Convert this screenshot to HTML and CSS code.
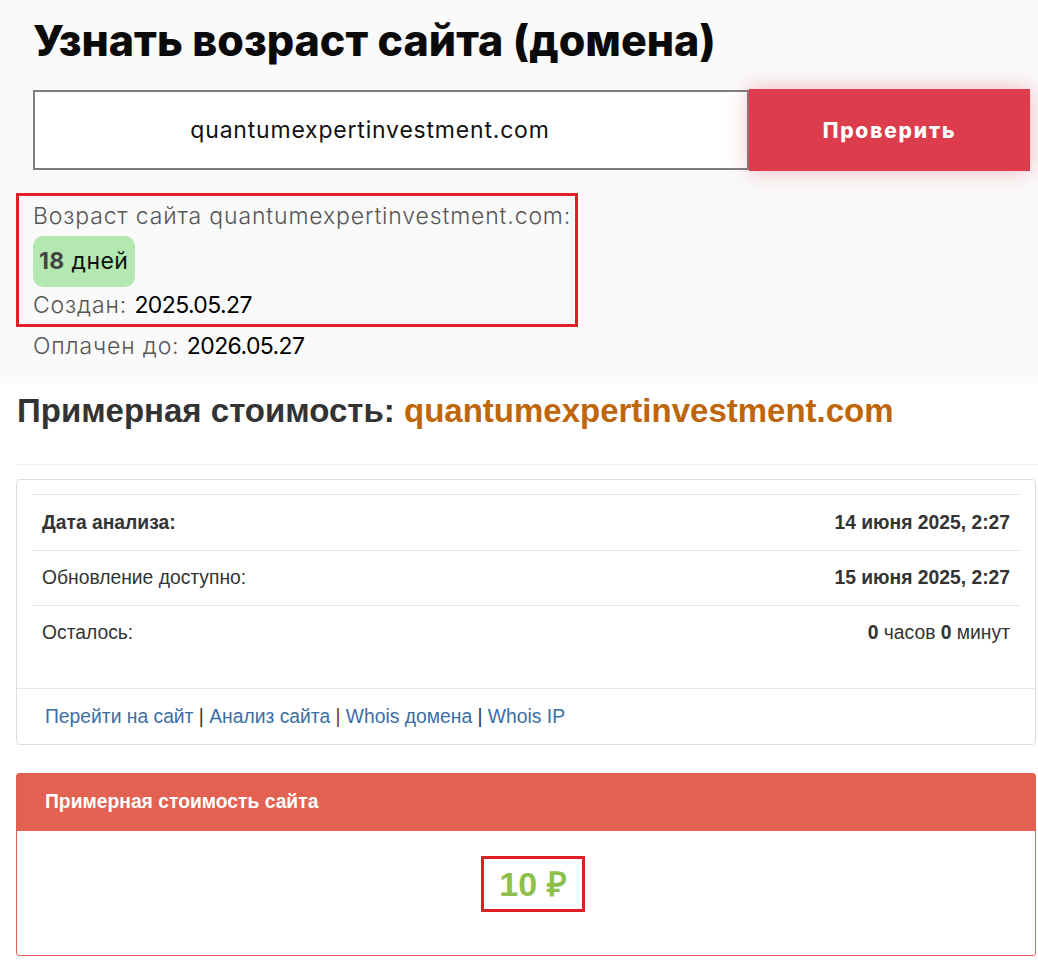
FILE: index.html
```html
<!DOCTYPE html>
<html lang="ru">
<head>
    <meta charset="UTF-8">
    <meta name="viewport" content="width=device-width, initial-scale=1.0">
    <title>Узнать возраст сайта</title>
    <link rel="stylesheet" href="styles.css">
</head>
<body>
    <section class="age">
        <h1>Узнать возраст сайта (домена)</h1>
        <form class="check">
            <div class="check-input">quantumexpertinvestment.com</div>
            <button type="button">Проверить</button>
        </form>
        <div class="age-result">
            <div class="line">Возраст сайта quantumexpertinvestment.com:</div>
            <div class="badge"><b>18</b> дней</div>
            <div class="line line-short">Создан: <span class="val">2025.05.27</span></div>
        </div>
        <div class="line paid">Оплачен до: <span class="val">2026.05.27</span></div>
    </section>

    <section class="cost">
        <h2>Примерная стоимость: <span class="domain">quantumexpertinvestment.com</span></h2>
        <hr>
        <div class="panel">
            <div class="panel-body">
                <table class="info">
                    <tr>
                        <td><b>Дата анализа:</b></td>
                        <td class="r"><b>14 июня 2025, 2:27</b></td>
                    </tr>
                    <tr>
                        <td>Обновление доступно:</td>
                        <td class="r"><b>15 июня 2025, 2:27</b></td>
                    </tr>
                    <tr>
                        <td>Осталось:</td>
                        <td class="r"><b>0</b> часов <b>0</b> минут</td>
                    </tr>
                </table>
            </div>
            <div class="panel-footer">
                <a href="#">Перейти на сайт</a> | <a href="#">Анализ сайта</a> <span class="sep-visited">|</span> <a href="#">Whois домена</a> | <a href="#">Whois IP</a>
            </div>
        </div>

        <div class="panel panel-red">
            <div class="panel-heading">Примерная стоимость сайта</div>
            <div class="panel-price">
                <span class="price">10 ₽</span>
            </div>
        </div>
    </section>
</body>
</html>
```

FILE: styles.css
```css
* {
    box-sizing: border-box;
    margin: 0;
    padding: 0;
}

body {
    background: #fff;
    font-family: 'Liberation Sans', Arial, sans-serif;
}

/* верхний блок - проверка возраста */
.age {
    background: #fafafa;
    padding: 0 8px 17px 33px;
    font-family: Inter, 'Noto Sans', sans-serif;
}

h1 {
    font-size: 43px;
    font-weight: 800;
    line-height: 80px;
    color: #0a0a0a;
}

.check {
    display: flex;
    align-items: center;
    margin-top: 9px;
}

.check-input {
    flex: 1;
    height: 80px;
    border: 2px solid #7d7d7d;
    background: #fff;
    display: flex;
    align-items: center;
    justify-content: center;
    padding-right: 42px;
    font-size: 23px;
    letter-spacing: 0.8px;
    color: #111;
}

.check button {
    width: 281px;
    height: 82px;
    border: none;
    background: #dd3c4c;
    color: #fff;
    font-family: Inter, 'Noto Sans', sans-serif;
    font-size: 21px;
    font-weight: 800;
    letter-spacing: 1.8px;
    box-shadow: 0 0 22px rgba(221, 60, 76, 0.35);
    cursor: pointer;
}

.age-result {
    width: 562px;
    margin: 22px 0 0 -17px;
    padding: 0 0 0 14px;
    border: 3px solid #e31e24;
}

.line {
    font-size: 23px;
    line-height: 40px;
    letter-spacing: 0.85px;
    color: #555;
    font-weight: 300;
}

.line-short {
    line-height: 37px;
}

.line .val {
    color: #000;
    font-weight: 400;
    letter-spacing: -0.6px;
}

.paid {
    line-height: 39px;
}

.badge {
    display: inline-block;
    height: 51px;
    line-height: 51px;
    padding: 0 7px 0 6px;
    background: #b3e9b0;
    border-radius: 10px;
    font-size: 23px;
    letter-spacing: 0.4px;
    color: #111;
}

.badge b {
    color: #444;
    font-weight: 700;
}

/* нижний блок - стоимость */
.cost {
    padding: 10px 2px 6px 16px;
    color: #333;
}

h2 {
    font-size: 33px;
    font-weight: 700;
    line-height: 35px;
    padding-left: 1px;
}

h2 .domain {
    color: #c0660a;
}

hr {
    border: none;
    border-top: 1px solid #eee;
    margin: 36px -2px 14px 0;
}

.panel {
    border: 1px solid #ddd;
    border-radius: 4px;
    background: #fff;
}

.panel-body {
    padding: 14px 15px 27px;
}

.info {
    width: 100%;
    border-collapse: collapse;
    font-size: 19.3px;
}

.info td {
    height: 55px;
    padding: 0 10px;
    border-top: 1px solid #e8e8e8;
}

.info tr:first-child td {
    height: 56px;
}

.info .r {
    text-align: right;
}

.panel-footer {
    border-top: 1px solid #e8e8e8;
    height: 56px;
    line-height: 55px;
    padding: 0 28px;
    font-size: 19.3px;
}

.panel-footer a {
    color: #3b6ea5;
    text-decoration: none;
}

.sep-visited {
    color: #7a3b1e;
}

.panel-red {
    margin-top: 28px;
    border-color: #e3604f;
    border-radius: 3px;
}

.panel-heading {
    background: #e36150;
    color: #fff;
    height: 57px;
    display: flex;
    align-items: center;
    padding-left: 28px;
    font-size: 19.3px;
    font-weight: 700;
}

.panel-price {
    height: 124px;
    display: flex;
    align-items: center;
    justify-content: center;
    padding: 0 0 18px 14px;
}

.price {
    display: inline-block;
    border: 3px solid #e31e24;
    padding: 0 15px;
    font-size: 34px;
    line-height: 50px;
    font-weight: 700;
    color: #8dc04a;
}
```
